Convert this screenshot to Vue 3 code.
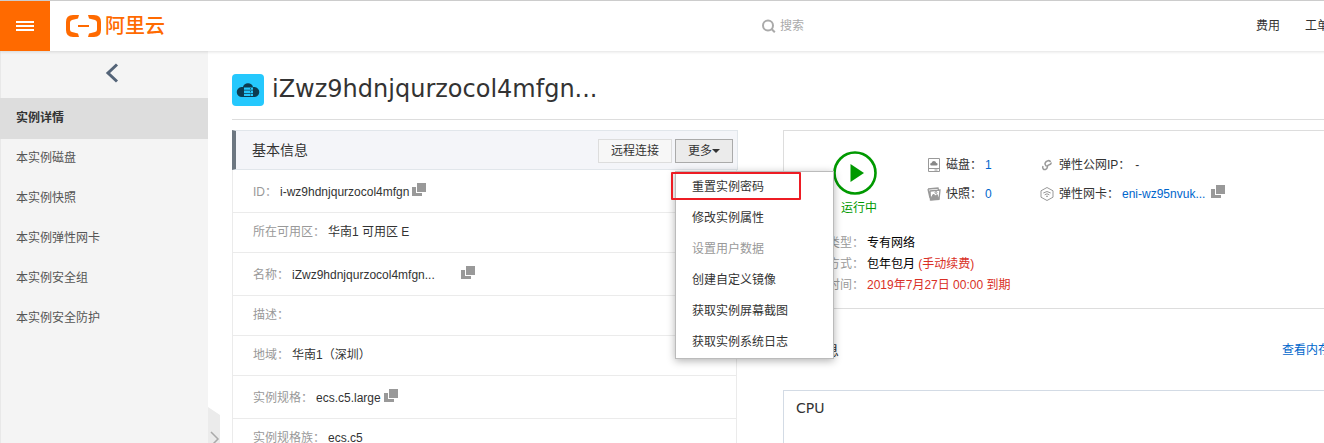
<script setup>
import { ref } from 'vue'

const keyword = ref('')

const sideItems = ['实例详情', '本实例磁盘', '本实例快照', '本实例弹性网卡', '本实例安全组', '本实例安全防护']

const rows = [
  { label: 'ID：', value: 'i-wz9hdnjqurzocol4mfgn', copy: true },
  { label: '所在可用区：', value: '华南1 可用区 E' },
  { label: '名称：', value: 'iZwz9hdnjqurzocol4mfgn...', copy: true, wide: true },
  { label: '描述：', value: '' },
  { label: '地域：', value: '华南1（深圳）' },
  { label: '实例规格：', value: 'ecs.c5.large', copy: true },
  { label: '实例规格族：', value: 'ecs.c5' }
]

const menuItems = [
  { text: '重置实例密码', marked: true },
  { text: '修改实例属性' },
  { text: '设置用户数据', disabled: true },
  { text: '创建自定义镜像' },
  { text: '获取实例屏幕截图' },
  { text: '获取实例系统日志' }
]
</script>

<template>
  <div class="page">
    <div class="canvas">
      <header class="topbar">
        <button class="burger" type="button" aria-label="菜单">
          <svg width="18" height="11" viewBox="0 0 18 11" fill="#fff">
            <path d="M0 0h18v2H0zM0 4h18v2H0zM0 8h18v2H0z" />
          </svg>
        </button>
        <a class="logo" href="#">
          <svg width="35" height="22" viewBox="0 0 35 22" fill="#ff6a00">
            <path d="M13 0H7Q0 0 0 7V15Q0 22 7 22H13L12 18.5L6 17Q4 16.5 4 14.5V7.500Q4 5.500 6 5L12 3.500Z" />
            <path d="M22 0H28Q35 0 35 7V15Q35 22 28 22H22L23 18.5L29 17Q31 16.500 31 14.500V7.500Q31 5.500 29 5L23 3.500Z" />
            <path d="M12 10h11v2H12z" />
          </svg>
          <span>阿里云</span>
        </a>
        <label class="search">
          <svg width="14" height="14" viewBox="0 0 14 14" fill="none" stroke="#aaa" stroke-width="2">
            <circle cx="6" cy="6.500" r="5" />
            <path d="M9.500 10l3.300 3.300" />
          </svg>
          <input v-model="keyword" type="text" placeholder="搜索" aria-label="搜索" />
        </label>
        <nav class="topnav">
          <a href="#">费用</a>
          <a href="#">工单</a>
        </nav>
      </header>

      <div class="body">
        <aside class="side">
          <button class="back" type="button" aria-label="返回">
            <svg width="14" height="20" viewBox="0 0 14 20" fill="none" stroke="#546478" stroke-width="3">
              <path d="M12 1.500L3 10l9 8.500" />
            </svg>
          </button>
          <nav>
            <a v-for="(item, i) in sideItems" :key="item" href="#" :class="['side-item', { active: i === 0 }]">{{ item }}</a>
          </nav>
          <button class="handle" type="button" aria-label="收起">
            <svg width="12" height="64" viewBox="0 0 12 64">
              <path d="M0 0l12 8v48l-12 8z" fill="#ebebeb" />
              <path d="M3 25l7 7-7 7" fill="none" stroke="#aaa" stroke-width="1.500" />
            </svg>
          </button>
        </aside>

        <main class="main">
          <div class="title">
            <svg width="32" height="32" viewBox="0 0 32 32">
              <rect width="32" height="32" rx="4" fill="#25c8fd" />
              <path d="M10 23a5 5 0 0 1-.5-10H11a5.200 5.200 0 0 1 10 0h1.500a5 5 0 0 1-.5 10z" fill="#0d3c50" />
              <path d="M12 13.500h9v2.300h-9zM12 16.600h9v2.300h-9zM12 19.700h9V22h-9z" fill="#25c8fd" />
              <path d="M18 14.200h1v1h-1zM18 17.300h1v1h-1zM18 20.400h1v1h-1z" fill="#0d3c50" />
            </svg>
            <h1>iZwz9hdnjqurzocol4mfgn...</h1>
          </div>

          <div class="columns">
            <section class="info">
              <div class="info-head">
                <h2>基本信息</h2>
                <button class="btn" type="button">远程连接</button>
                <div class="more">
                  <button class="btn pressed" type="button" aria-expanded="true">更多<i class="caret"></i></button>
                  <ul class="menu">
                    <li v-for="m in menuItems" :key="m.text" :class="{ marked: m.marked }">
                      <button type="button" :disabled="m.disabled">{{ m.text }}</button>
                    </li>
                  </ul>
                </div>
              </div>
              <dl class="rows">
                <div v-for="r in rows" :key="r.label" :class="['row', { tall: r.copy }]">
                  <dt>{{ r.label }}</dt>
                  <dd :class="{ wide: r.wide }">{{ r.value }}</dd>
                  <button v-if="r.copy" class="copy" type="button" aria-label="复制">
                    <svg width="14" height="14" viewBox="0 0 14 14" fill="#999">
                      <path d="M5 0h9v9H5z" /><path d="M0 4h4v6h6v3H0z" />
                    </svg>
                  </button>
                </div>
              </dl>
            </section>

            <div class="right">
              <section class="status">
                <div class="summary">
                  <div class="run">
                    <svg width="44" height="44" viewBox="0 0 44 44">
                      <circle cx="22" cy="22" r="20.500" fill="none" stroke="#090" stroke-width="2.600" />
                      <path d="M17.500 13L31 22l-13.500 9z" fill="#090" />
                    </svg>
                    <span>运行中</span>
                  </div>
                  <div class="stats">
                    <div class="stat">
                      <svg width="14" height="14" viewBox="0 0 14 14" fill="none" stroke="#999">
                        <path d="M1.500.5h11v13h-11zM1.500 10.500h11M7.500 12h3" />
                        <path d="M4.500 7.500a1.300 1.300 0 0 1 0-2.600 2.500 2.500 0 0 1 4.800 0 1.300 1.300 0 0 1 0 2.600z" fill="#888" stroke="none" />
                      </svg>
                      <span>磁盘：</span><a href="#">1</a>
                    </div>
                    <div class="stat">
                      <svg width="14" height="14" viewBox="0 0 14 14" fill="none" stroke="#999">
                        <path d="M1 2l10-1 .5 2M3 4l10-1-1 9.500-8.500.500zM1 2l2 9" stroke-width="1.300" />
                        <path d="M4 11l2.500-4 2 2 1.500-1.500 2 4.500-8 .8z" fill="#999" />
                        <circle cx="9" cy="5.500" r="1" />
                      </svg>
                      <span>快照：</span><a href="#">0</a>
                    </div>
                  </div>
                  <div class="stats network">
                    <div class="stat eip">
                      <svg width="14" height="14" viewBox="0 0 14 14" fill="none" stroke="#999" stroke-width="1.500">
                        <path d="M5 5.500c1-3.500 5-3.500 5.500-1.500M3 8c-1 2 .5 4 2.500 3.500 3-.7 1-4 3-4.500 1.500-.5 3-.5 2.500-2.500M5 5c-.5 2 1 2 1.500 3.500" />
                      </svg>
                      <span>弹性公网IP：</span><b class="none">-</b>
                    </div>
                    <div class="stat">
                      <svg width="14" height="14" viewBox="0 0 14 14" fill="none" stroke="#999">
                        <path d="M7 .5l6 3.300v6.400l-6 3.300-6-3.300V3.800z" />
                        <path d="M3.300 6q3.700-3 7.400 0M4.700 7.800q2.300-2 4.600 0M6 9.500q1-.9 2 0" />
                      </svg>
                      <span>弹性网卡：</span><a href="#">eni-wz95nvuk...</a>
                      <button class="copy" type="button" aria-label="复制">
                        <svg width="14" height="14" viewBox="0 0 14 14" fill="#999">
                          <path d="M5 0h9v9H5z" /><path d="M0 4h4v6h6v3H0z" />
                        </svg>
                      </button>
                    </div>
                  </div>
                </div>
                <dl class="details">
                  <div><dt>网络类型：</dt><dd>专有网络</dd></div>
                  <div><dt>付费方式：</dt><dd>包年包月 <em>(手动续费)</em></dd></div>
                  <div><dt>到期时间：</dt><dd><em>2019年7月27日 00:00 到期</em></dd></div>
                </dl>
              </section>

              <div class="monitor-head">
                <h2>监控信息</h2>
                <a href="#">查看内存</a>
              </div>
              <section class="chart"><h3>CPU</h3></section>
            </div>
          </div>
        </main>
      </div>
    </div>
  </div>
</template>

<style>
body {
  margin: 0;
  background: #fff;
}
</style>

<style scoped>
.page {
  height: 100vh;
  overflow: hidden;
  font: 12px/18px "Liberation Sans", "Noto Sans CJK SC", sans-serif;
  color: #333;
}
.canvas {
  width: calc(100% + 6px);
  height: 100%;
  display: flex;
  flex-direction: column;
}
button {
  font: inherit;
  color: inherit;
  margin: 0;
  padding: 0;
  border: 0;
  background: none;
  cursor: pointer;
}
a {
  color: #06c;
  text-decoration: none;
}
svg {
  display: block;
  flex: none;
}
h1, h2, h3, dl, dd, ul {
  margin: 0;
  padding: 0;
  font-weight: normal;
}
.topbar {
  position: relative;
  z-index: 2;
  flex: none;
  display: grid;
  grid-template-columns: 50px 1fr 320px 320px;
  align-items: center;
  height: 50px;
  border-top: 1px solid #ccc;
  background: #fff;
  box-shadow: 0 1px 3px rgba(0, 0, 0, 0.12);
}
.burger {
  height: 50px;
  display: grid;
  place-items: center;
  background: #ff6a00;
}
.logo {
  display: flex;
  align-items: center;
  gap: 4px;
  padding-left: 16px;
  font-size: 20px;
  line-height: 24px;
  font-weight: 500;
  color: #ff6a00;
}
.search {
  display: flex;
  align-items: center;
  gap: 4px;
  padding-left: 72px;
}
.search input {
  width: 160px;
  padding: 0;
  border: 0;
  outline: 0;
  background: none;
  font: inherit;
  color: #333;
}
.search input::placeholder {
  color: #aaa;
}
.topnav {
  display: flex;
  justify-content: flex-end;
  gap: 25px;
  padding-right: 1px;
}
.topnav a {
  color: #333;
}
.body {
  flex: 1;
  min-height: 0;
  display: flex;
}
.side {
  position: relative;
  flex: none;
  box-sizing: border-box;
  width: 208px;
  background: #f4f4f4;
  box-shadow: inset 1px 0 0 #e8e8e8;
}
.back {
  width: 100%;
  height: 47px;
  padding: 0 0 3px 16px;
  display: grid;
  place-items: center;
}
.side-item {
  display: block;
  padding: 1px 16px 0;
  line-height: 39px;
  color: #555;
}
.side-item.active {
  background: #ddd;
  box-shadow: 0 1px 0 #ddd;
  font-weight: bold;
  color: #333;
}
.handle {
  position: absolute;
  left: 100%;
  top: 356px;
}
.main {
  flex: 1;
  min-width: 0;
  padding-left: 24px;
}
.title {
  display: flex;
  align-items: center;
  gap: 8px;
  height: 32px;
  padding: 23px 0 13px;
  border-bottom: 1px solid #ddd;
}
.title h1 {
  font: 24px/30px "DejaVu Sans", sans-serif;
}
.title h1 {
  margin-top: -2px;
}
.columns {
  display: grid;
  grid-template-columns: minmax(0, 506fr) minmax(0, 547fr);
  gap: 45px;
  padding-top: 10px;
}
.info-head {
  display: flex;
  align-items: center;
  gap: 3px;
  height: 36px;
  padding: 2px 4px 0 16px;
  border: 1px solid #e1e6eb;
  border-left: 4px solid #6d7781;
  background: #f4f5f9;
}
.info-head h2 {
  flex: 1;
  padding-bottom: 2px;
  font-size: 14px;
}
.btn {
  display: flex;
  align-items: center;
  box-sizing: border-box;
  height: 24px;
  padding: 0 12px;
  border: 1px solid #ddd;
  background: #f7f7f7;
}
.btn.pressed {
  border-color: #aaa;
  background: #ebebeb;
}
.caret {
  border: 4px solid transparent;
  border-top-color: #333;
  border-bottom: 0;
}
.more {
  position: relative;
}
.menu {
  position: absolute;
  z-index: 3;
  left: 0;
  top: 32px;
  width: 157px;
  list-style: none;
  border: 1px solid #bbb;
  background: #fff;
  box-shadow: 0 2px 8px rgba(0, 0, 0, 0.3);
}
.menu li {
  position: relative;
}
.menu button {
  display: block;
  width: 100%;
  padding: 0 16px;
  line-height: 31px;
  text-align: left;
}
.menu button:disabled {
  color: #999;
}
.marked::after {
  content: "";
  position: absolute;
  inset: 0 32px 3px -5px;
  border: 2px solid #ed1c24;
  border-radius: 1px;
  pointer-events: none;
}
.rows {
  margin-right: 1px;
  border: 1px solid #ebebeb;
  border-top: 0;
}
.row {
  display: flex;
  align-items: center;
  box-sizing: border-box;
  height: 40px;
  padding: 0 20px 1px;
  border-bottom: 1px solid #ebebeb;
}
.row.tall {
  height: 43px;
  padding: 2px 20px 0;
}
.row dt,
.details dt {
  color: #999;
  margin-right: 3px;
}
.row dd.wide {
  width: 166px;
}
.copy {
  margin: 0 2px 4px 3px;
}
.status {
  box-sizing: border-box;
  height: 179px;
  padding: 20px 0 0 20px;
  border: 1px solid #ddd;
}
.summary {
  display: flex;
  height: 82px;
}
.run {
  display: grid;
  justify-items: end;
  align-content: start;
  gap: 4px;
  width: 44px;
  margin: 0 50px 0 29px;
  color: #090;
}
.stats {
  width: 113px;
  padding-top: 5px;
}
.stats.network {
  width: auto;
}
.stat {
  display: flex;
  align-items: center;
  gap: 3px;
  height: 18px;
  margin-bottom: 11px;
  white-space: nowrap;
}
.stat > span {
  margin-left: 2px;
}
.none {
  margin-left: 2px;
  font-weight: normal;
}
.details {
  line-height: 21px;
}
.details div {
  display: flex;
}
.details dd {
  color: #000;
}
.details em {
  font-style: normal;
  color: #d93026;
}
.monitor-head {
  display: flex;
  align-items: center;
  justify-content: space-between;
  height: 81px;
}
.monitor-head h2 {
  font-size: 14px;
}
.chart {
  height: 200px;
  padding: 7px 12px;
  border: 1px solid #d3dbe5;
}
.chart h3 {
  font: 14px/20px "DejaVu Sans", sans-serif;
}
</style>
